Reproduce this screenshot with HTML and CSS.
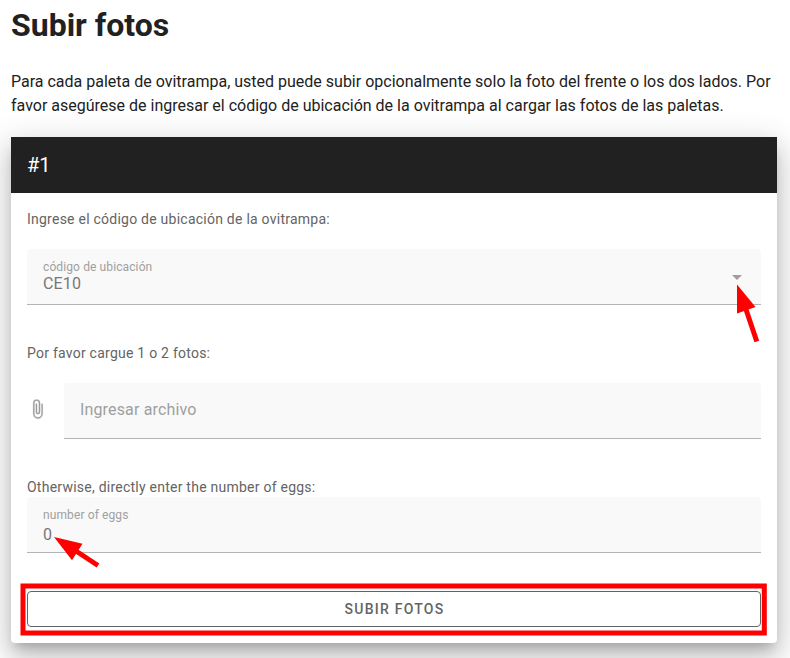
FILE: index.html
```html
<!DOCTYPE html>
<html lang="es">
<head>
<meta charset="utf-8">
<title>Subir fotos</title>
<link rel="stylesheet" href="styles.css">
</head>
<body>
<main class="page">
  <h1 class="title">Subir fotos</h1>
  <p class="intro">Para cada paleta de ovitrampa, usted puede subir opcionalmente solo la foto del frente o los dos lados. Por favor asegúrese de ingresar el código de ubicación de la ovitrampa al cargar las fotos de las paletas.</p>
  <section class="card">
    <header class="card-header">#1</header>
    <div class="card-body">
      <div class="label">Ingrese el código de ubicación de la ovitrampa:</div>
      <div class="field field-select">
        <div class="field-text">
          <span class="caption">código de ubicación</span>
          <span class="value">CE10</span>
        </div>
        <svg class="caret" viewBox="0 0 24 24"><path d="M7 10l5 5 5-5z"/></svg>
      </div>
      <div class="label label-files">Por favor cargue 1 o 2 fotos:</div>
      <div class="file-row">
        <svg class="clip" viewBox="0 0 24 24"><path d="M16.500 6v11.500a4 4 0 0 1-4 4 4 4 0 0 1-4-4V5A2.500 2.500 0 0 1 11 2.500 2.500 2.500 0 0 1 13.500 5v10.500a1 1 0 0 1-1 1 1 1 0 0 1-1-1V6H10v9.500a2.500 2.500 0 0 0 2.500 2.500 2.500 2.500 0 0 0 2.500-2.500V5a4 4 0 0 0-4-4 4 4 0 0 0-4 4v12.500a5.500 5.500 0 0 0 5.500 5.500 5.500 5.500 0 0 0 5.500-5.500V6z"/></svg>
        <div class="field field-file">Ingresar archivo</div>
      </div>
      <div class="label label-eggs">Otherwise, directly enter the number of eggs:</div>
      <div class="field field-eggs">
        <div class="field-text">
          <span class="caption">number of eggs</span>
          <span class="value">0</span>
        </div>
      </div>
      <button class="submit">SUBIR FOTOS</button>
    </div>
  </section>
</main>
<svg class="marks" viewBox="0 0 790 658">
  <path class="head" d="M737 284.500L755.500 307 737 313.500z"/>
  <path class="shaft" d="M745.500 308L756.800 341.500"/>
  <path class="head" d="M54 537L82.500 543.800 72 560.300z"/>
  <path class="shaft" d="M76 551L98 565.500"/>
  <rect class="frame" x="23" y="586" width="741.300" height="47"/>
</svg>
</body>
</html>
```
FILE: styles.css
```css
* { box-sizing: border-box; }
body {
  margin: 0;
  height: 658px;
  overflow: hidden;
  position: relative;
  background: #fff;
  color: #212121;
  font: 16px/24px Roboto, sans-serif;
}
.page { padding: 1px 13px 0 11px; }
.title { margin: 0; font-size: 32px; line-height: 48px; font-weight: 700; }
.intro { margin: 21px 0 19px; }
.card {
  height: 506px;
  background: #fff;
  border-radius: 4px;
  box-shadow: 0 8px 10px -5px rgba(0,0,0,.2), 0 16px 24px 2px rgba(0,0,0,.14), 0 6px 30px 5px rgba(0,0,0,.12);
}
.card-header {
  height: 56px;
  padding: 0 16px;
  background: #212121;
  color: #fff;
  font-size: 20px;
  line-height: 56px;
}
.card-body { padding: 15px 16px 16px; }
.label {
  height: 22px;
  font-size: 14px;
  line-height: 22px;
  letter-spacing: .24px;
  color: #646464;
}
.field {
  display: flex;
  height: 56px;
  padding: 0 12px 0 16px;
  background: #f9f9f9;
  border-bottom: 1px solid #b4b4b4;
  border-radius: 4px 4px 0 0;
  letter-spacing: .15px;
}
.field-text { flex: 1; display: flex; flex-direction: column; padding-top: 8px; }
.caption { font-size: 12px; line-height: 20px; color: #a0a0a0; letter-spacing: .11px; }
.value { line-height: 24px; color: #777; }
.field-select { margin-top: 19px; }
.field-select .value { margin-top: -5px; }
.field-eggs .value { margin-top: -2px; }
.caret { width: 24px; height: 24px; margin-top: 16px; fill: #9e9e9e; }
.label-files { margin-top: 37px; }
.file-row { display: flex; margin-top: 19px; }
.clip { width: 21px; height: 22px; margin: 15px 16px 0 0; fill: #9e9e9e; stroke: #9e9e9e; stroke-width: .25; }
.field-file { flex: 1; line-height: 54px; color: #9f9f9f; }
.label-eggs { margin-top: 37px; }
.field-eggs { margin-top: -1px; }
.submit {
  display: block;
  width: 100%;
  height: 36px;
  margin-top: 38px;
  padding: 0 0 0 1px;
  background: #fff;
  border: 1px solid #646464;
  border-radius: 4px;
  color: #646464;
  font: 500 14px/34px Roboto, sans-serif;
  letter-spacing: 1.25px;
}
.marks { position: absolute; left: 0; top: 0; width: 790px; height: 658px; pointer-events: none; }
.head { fill: #f00; }
.shaft { stroke: #f00; stroke-width: 5; }
.frame { fill: none; stroke: #f00; stroke-width: 5; }
```
